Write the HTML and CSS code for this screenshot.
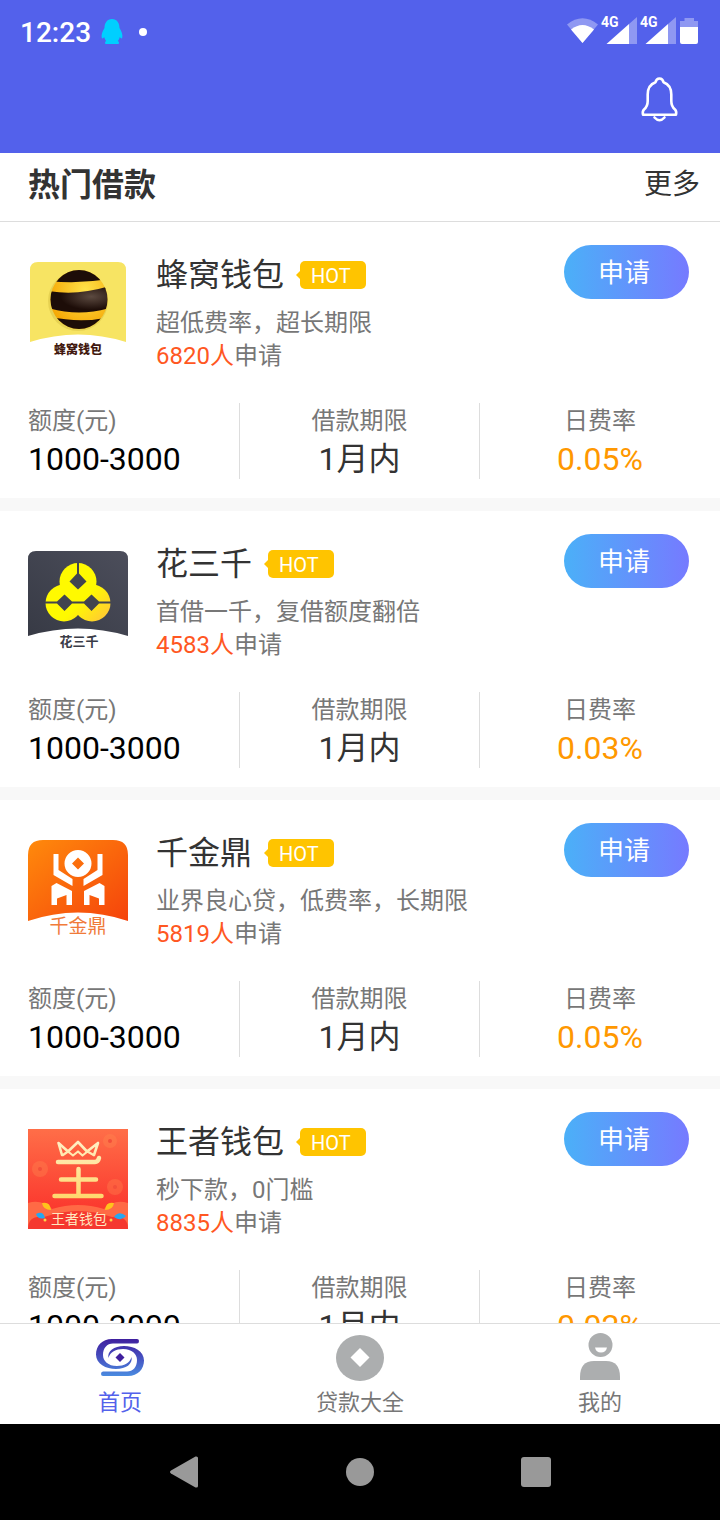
FILE: index.html
```html
<!DOCTYPE html>
<html lang="zh-CN">
<head>
<meta charset="utf-8">
<meta name="viewport" content="width=device-width, initial-scale=1.0">
<title>热门借款</title>
<link rel="stylesheet" href="styles.css">
</head>
<body>
<div class="statusbar">
  <span class="time">12:23</span>
  <svg class="qq" width="22" height="26" viewBox="0 0 22 26"><path fill="#00cfff" d="M11 0C6 0 3.500 4 3.500 9 1.500 12 0 16 .8 19c.4.900 1.600.200 2.400-1 .4 1.700 1.200 3 2 4-1.600.8-1.600 3-.2 3h12c1.400 0 1.400-2.200-.2-3 .8-1 1.600-2.300 2-4 .8 1.200 2 1.900 2.400 1C22 16 20.500 12 18.500 9 18.500 4 16 0 11 0z"/></svg>
  <span class="dot"></span>
  <svg class="signals" width="132" height="36" viewBox="0 0 132 36">
    <g fill="#fff" opacity=".35">
      <path d="M0 10.500Q15.500-2 31 10.500L15.500 29z"/>
      <path d="M62 10l8-7v27h-8zM101 10l8-7v27h-8z"/>
      <path d="M113 13V7h4.500V4h9.500v3h4v6z"/>
    </g>
    <g fill="#fff">
      <path d="M4 15.500Q15.500 6.500 27 15.500L15.500 29z"/>
      <path d="M39.500 30L62 10v20zM78.500 30L101 10v20zM113 13h18v15q0 2-2 2h-14q-2 0-2-2z"/>
      <text x="34" y="13">4G</text>
      <text x="73" y="13">4G</text>
    </g>
  </svg>
</div>

<header class="topbar">
  <button class="bell" aria-label="消息">
    <svg width="40" height="48" viewBox="0 0 40 48" fill="none" stroke="#fff" stroke-width="2.600" stroke-linejoin="round" stroke-linecap="round">
      <path d="M19.500 2.500c-2.300 0-3.500 1.300-4 3.700C10.500 8 7.700 12.500 7.700 18.500V25c0 4.500-1.200 6.500-3.700 8.500-1.300 1.200-1.500 3-1 5.200h33c.5-2.200.3-4-1-5.200-2.500-2-3.700-4-3.700-8.500v-6.500c0-6-2.800-10.500-7.800-12.300-.5-2.400-1.700-3.700-4-3.700z"/>
      <path d="M14.500 41.500q5 5.500 10 0"/>
    </svg>
  </button>
</header>

<div class="section-head">
  <h1>热门借款</h1>
  <a href="#">更多</a>
</div>

<main class="list">
  <article class="card">
    <div class="card-top">
      <svg class="logo" viewBox="0 0 100 100">
        <defs>
          <radialGradient id="bee" cx=".6" cy=".35" r=".65"><stop offset="0" stop-color="#ffe24a"/><stop offset="1" stop-color="#f5a400"/></radialGradient>
          <radialGradient id="beeDark" cx=".7" cy=".4" r=".5"><stop offset="0" stop-color="#5c4a40"/><stop offset="1" stop-color="#1d0d08"/></radialGradient>
          <clipPath id="ball"><ellipse cx="51" cy="37.500" rx="28.500" ry="29.500"/></clipPath>
        </defs>
        <path fill="#f7e463" d="M2 80V8q0-8 8-8h80q8 0 8 8v72Q50 65 2 80z"/>
        <ellipse cx="50" cy="39" rx="30" ry="30" fill="#dcc648" opacity=".6"/>
        <g clip-path="url(#ball)">
          <rect x="20" y="6" width="62" height="64" fill="url(#bee)"/>
          <path fill="#1d0d08" d="M20 5h62v12Q51 22 20 19zM20 54q31 8 62 1v16H20z"/>
          <path fill="url(#beeDark)" d="M20 29q30 5 62-5v22q-31 9-62 0z"/>
        </g>
        <text x="50" y="92" font-size="12" font-weight="900" fill="#42190f">蜂窝钱包</text>
      </svg>
      <div class="info">
        <h2>蜂窝钱包 <span class="hot">HOT</span></h2>
        <p>超低费率，超长期限</p>
        <p><em>6820人</em>申请</p>
      </div>
      <button class="apply">申请</button>
    </div>
    <dl class="stats">
      <div><dt>额度(元)</dt><dd>1000-3000</dd></div>
      <div><dt>借款期限</dt><dd>1月内</dd></div>
      <div><dt>日费率</dt><dd>0.05%</dd></div>
    </dl>
  </article>

  <article class="card">
    <div class="card-top">
      <svg class="logo" viewBox="0 0 100 100">
        <defs>
          <linearGradient id="slate" x1="0" y1="1" x2="1" y2="0"><stop offset="0" stop-color="#373a45"/><stop offset="1" stop-color="#4c4e5b"/></linearGradient>
          <linearGradient id="lemon" gradientUnits="userSpaceOnUse" x1="20" y1="12" x2="80" y2="70"><stop offset=".6" stop-color="#fffa00"/><stop offset="1" stop-color="#ffc43a"/></linearGradient>
        </defs>
        <path fill="url(#slate)" d="M0 85V8q0-8 8-8h84q8 0 8 8v77Q50 70 0 85z"/>
        <g fill="url(#lemon)">
          <circle cx="50" cy="30.500" r="18.500"/>
          <circle cx="36" cy="52" r="18.500"/>
          <circle cx="64" cy="52" r="18.500"/>
        </g>
        <path fill="#42444f" d="M49 11h2v11.500l7.500 8-8.500 8-8.500-8 7.500-8zM17 50.500h12l7.500-7 7.500 7h12l7.500-7 7.500 7h12v2H71l-7.500 7.500-7.500-7.500H44L36.500 60 29 52.500H17z"/>
        <text x="51" y="95" font-size="13" font-weight="700" fill="#3a3c47">花三千</text>
      </svg>
      <div class="info">
        <h2>花三千 <span class="hot">HOT</span></h2>
        <p>首借一千，复借额度翻倍</p>
        <p><em>4583人</em>申请</p>
      </div>
      <button class="apply">申请</button>
    </div>
    <dl class="stats">
      <div><dt>额度(元)</dt><dd>1000-3000</dd></div>
      <div><dt>借款期限</dt><dd>1月内</dd></div>
      <div><dt>日费率</dt><dd>0.03%</dd></div>
    </dl>
  </article>

  <article class="card">
    <div class="card-top">
      <svg class="logo" viewBox="0 0 100 100">
        <defs>
          <linearGradient id="orange" x1="0" y1="0" x2="1" y2="1"><stop offset="0" stop-color="#ff8a0c"/><stop offset="1" stop-color="#f5430c"/></linearGradient>
        </defs>
        <path fill="url(#orange)" d="M0 81V15Q0 0 15 0h70q15 0 15 15v66Q50 64 0 81z"/>
        <g fill="#fff">
          <path fill-rule="evenodd" d="M50 10a13.500 13.500 0 1 1 0 27 13.500 13.500 0 1 1 0-27zm0 7.500l-6 6 6 6 6-6z"/>
          <path d="M25.500 14h5v16l14 9v7l-19-11zM74.500 14h-5v16l-14 9v7l19-11z"/>
          <path d="M23.500 46l5-3L44 51v14h-5.500V55l-9.500 3.500V65h-5.500zM76.500 46l-5-3L56 51v14h5.500V55l9.500 3.500V65h5.500z"/>
        </g>
        <text x="50" y="93" font-size="19" fill="#f07b3a">千金鼎</text>
      </svg>
      <div class="info">
        <h2>千金鼎 <span class="hot">HOT</span></h2>
        <p>业界良心贷，低费率，长期限</p>
        <p><em>5819人</em>申请</p>
      </div>
      <button class="apply">申请</button>
    </div>
    <dl class="stats">
      <div><dt>额度(元)</dt><dd>1000-3000</dd></div>
      <div><dt>借款期限</dt><dd>1月内</dd></div>
      <div><dt>日费率</dt><dd>0.05%</dd></div>
    </dl>
  </article>

  <article class="card">
    <div class="card-top">
      <svg class="logo" viewBox="0 0 100 100">
        <defs>
          <linearGradient id="red" x1="0" y1="0" x2="0" y2="1"><stop offset="0" stop-color="#ff6e48"/><stop offset="1" stop-color="#fa2b28"/></linearGradient>
          <linearGradient id="gold" gradientUnits="userSpaceOnUse" x1="0" y1="10" x2="0" y2="70"><stop offset="0" stop-color="#fff0c8"/><stop offset="1" stop-color="#ffd76b"/></linearGradient>
        </defs>
        <path fill="url(#red)" d="M0 0h100v100H0z"/>
        <g fill="#ff8a50" opacity=".35"><circle cx="82" cy="12" r="7"/><circle cx="12" cy="40" r="8"/><circle cx="87" cy="58" r="8"/></g>
        <g fill="#f4503a"><circle cx="82" cy="12" r="2"/><circle cx="12" cy="40" r="2"/><circle cx="87" cy="58" r="2"/></g>
        <path fill="#ff6a45" d="M0 74q14-4 24 6 26-8 52 0 10-10 24-6v26H0z"/>
        <path fill="#f5382f" d="M0 100q0-14 16-12 34-12 68 0 16-2 16 12z"/>
        <path fill="#ffc21c" d="M14 74q8-2 9 7-8 0-9-7zM86 74q-8-2-9 7 8 0 9-7z"/>
        <path fill="#27a8f0" d="M8 85q7-4 9 4-7 2-9-4zM98 87q-7-6-12 1 7 5 12-1z"/>
        <circle cx="17" cy="91" r="1.500" fill="#ffd24a"/><circle cx="83" cy="91" r="1.500" fill="#ffd24a"/>
        <g fill="none" stroke="url(#gold)" stroke-linecap="round" stroke-linejoin="round">
          <path stroke-width="2.600" d="M34 26l-3.500-12 9.500 8.500L50 13l9 9.500 11-8.500-4 12"/>
          <path stroke-width="2.200" d="M35 26l5-3.500 5 4 5-4 4.500 4 5-4 6 3.500"/>
          <path stroke-width="4.500" d="M30 33h37q3 0 4-4M33 50.500h35M26.500 67h47M50.500 40v27"/>
        </g>
        <text x="51" y="95" font-size="14" fill="#ffe9c0">王者钱包</text>
      </svg>
      <div class="info">
        <h2>王者钱包 <span class="hot">HOT</span></h2>
        <p>秒下款，0门槛</p>
        <p><em>8835人</em>申请</p>
      </div>
      <button class="apply">申请</button>
    </div>
    <dl class="stats">
      <div><dt>额度(元)</dt><dd>1000-3000</dd></div>
      <div><dt>借款期限</dt><dd>1月内</dd></div>
      <div><dt>日费率</dt><dd>0.02%</dd></div>
    </dl>
  </article>
</main>

<nav class="tabs">
  <a class="active" href="#">
    <svg width="48" height="48" viewBox="0 0 48 48">
      <defs><linearGradient id="home" gradientUnits="userSpaceOnUse" x1="0" y1="6" x2="0" y2="43"><stop offset="0" stop-color="#3f1f9e"/><stop offset=".5" stop-color="#4650c0"/><stop offset="1" stop-color="#4a8be0"/></linearGradient></defs>
      <g fill="url(#home)">
        <path d="M41 6H16C6 6 0 13 0 21.500 0 31 10 36 20 36c10 0 17-5 15.500-12C34 30 28 33 21 33 12 33 7 28 7 22c0-7 4-11.500 10-11.500h24Q43 10.500 43 8 43 6 41 6z"/>
        <path d="M7 43h25c10 0 16-7 16-15.500C48 18 38 13 28 13c-10 0-17 5-15.500 12C14 19 20 16 27 16c9 0 14 5 14 11 0 7-4 11.500-10 11.500H7Q5 38.500 5 41 5 43 7 43z"/>
      </g>
      <path fill="#3f1f9e" d="M24 20l4.500 4.500L24 29l-4.500-4.500z"/>
    </svg>
    <span>首页</span>
  </a>
  <a href="#">
    <svg width="48" height="48" viewBox="0 0 48 48"><ellipse cx="24" cy="25" rx="24" ry="23" fill="#acaeaf"/><path fill="#fff" d="M24 15l9.500 9.500L24 34l-9.500-9.500z"/></svg>
    <span>贷款大全</span>
  </a>
  <a href="#">
    <svg width="48" height="48" viewBox="0 0 48 48"><circle cx="24.500" cy="12" r="12" fill="#acaeaf"/><path fill="#fff" d="M19 14.500h12q-1 5-6 5t-6-5z"/><path fill="#acaeaf" d="M4 47v-3q0-16 14-16h12q14 0 14 16v3z"/></svg>
    <span>我的</span>
  </a>
</nav>

<div class="sysbar">
  <button aria-label="返回"><svg width="32" height="32" viewBox="0 0 32 32"><path d="M3 14.500L27.500.500Q30 0 30 2v28q0 2-2.500 1.500L3 17.500q-2-1.500 0-3z"/></svg></button>
  <button aria-label="主页"><svg width="32" height="32" viewBox="0 0 32 32"><circle cx="16" cy="16" r="14"/></svg></button>
  <button aria-label="最近任务"><svg width="32" height="32" viewBox="0 0 32 32"><rect x="1" y="1" width="30" height="30" rx="3"/></svg></button>
</div>
</body>
</html>
```

FILE: styles.css
```css
* {
  box-sizing: border-box;
}
body {
  margin: 0;
  height: 100vh;
  display: flex;
  flex-direction: column;
  font-family: Roboto, "Noto Sans CJK SC", sans-serif;
  background: #fff;
  color: #333;
}
h1, h2, p, dl, dd {
  margin: 0;
}
a {
  color: inherit;
  text-decoration: none;
}
button {
  padding: 0;
  border: none;
  background: none;
  font-family: inherit;
  cursor: pointer;
}
svg {
  display: block;
}

/* status bar + header */
.statusbar {
  display: flex;
  align-items: center;
  height: 64px;
  padding: 0 21px 0 20px;
  background: #5361eb;
  color: #fff;
}
.time {
  font-size: 28px;
  font-weight: 500;
}
.qq {
  margin-left: 10px;
}
.dot {
  width: 8px;
  height: 8px;
  margin-left: 16px;
  border-radius: 50%;
  background: #fff;
}
.signals {
  margin-left: auto;
  font-size: 14px;
  font-weight: 700;
}
.topbar {
  display: flex;
  justify-content: flex-end;
  height: 89px;
  padding: 12px 40px;
  background: #5361eb;
}
.bell {
  height: 48px;
}

.section-head {
  display: flex;
  justify-content: space-between;
  align-items: center;
  padding: 8px 20px 12px 28px;
  border-bottom: 1px solid #ddd;
  line-height: 48px;
}
.section-head h1 {
  font-size: 32px;
  font-weight: 700;
}
.section-head a {
  font-size: 28px;
}

/* loan cards */
.list {
  flex: 1;
  min-height: 0;
  overflow-y: auto;
  scrollbar-width: none;
}
.card {
  padding: 23px 0 19px;
  border-bottom: 13px solid #f8f8f8;
}
.card-top {
  display: flex;
  align-items: flex-start;
  padding: 0 31px 0 28px;
}
.logo {
  width: 100px;
  height: 100px;
  margin-top: 17px;
  font-family: "Noto Sans CJK SC", sans-serif;
  text-anchor: middle;
}
.info {
  flex: 1;
  margin: 10px 0 30px 28px;
}
.info h2 {
  display: flex;
  align-items: center;
  margin-bottom: 12px;
  font-size: 32px;
  font-weight: 400;
  line-height: 40px;
}
.hot {
  position: relative;
  width: 66px;
  height: 28px;
  margin-left: 16px;
  padding-left: 11px;
  border-radius: 5px;
  background: #ffc400;
  color: #fff;
  font-size: 20px;
  line-height: 30px;
}
.hot::before {
  content: "";
  position: absolute;
  left: -4px;
  top: 10px;
  border: 4px solid transparent;
  border-left: none;
  border-right-color: #ffc400;
}
.info p {
  font-size: 24px;
  line-height: 33px;
  color: #777;
}
.info em {
  color: #ff5722;
  font-style: normal;
}
.apply {
  width: 125px;
  height: 54px;
  padding: 0 5px 4px 0;
  border-radius: 27px;
  background: linear-gradient(to right, #4bb0f8, #767aff);
  color: #fff;
  font-size: 26px;
}

.stats {
  display: grid;
  grid-template-columns: repeat(3, 1fr);
  text-align: center;
}
.stats div {
  border-right: 1px solid #ddd;
}
.stats div:first-child {
  padding-left: 28px;
  text-align: left;
}
.stats div:last-child {
  border-right: none;
}
.stats dt {
  font-size: 24px;
  line-height: 36px;
  color: #777;
}
.stats dd {
  font-size: 32px;
  line-height: 40px;
}
.stats div:first-child dd {
  color: #000;
}
.stats div:last-child dd {
  color: #ff9800;
}

/* bottom tabs */
.tabs {
  display: grid;
  grid-template-columns: repeat(3, 1fr);
  border-top: 1px solid #ddd;
  background: #fff;
}
.tabs a {
  display: flex;
  flex-direction: column;
  align-items: center;
  padding: 9px 0 7px;
  font-size: 22px;
  line-height: 28px;
  color: #777;
}
.tabs svg {
  margin-bottom: 8px;
}
.tabs .active {
  color: #5361eb;
}

.sysbar {
  display: flex;
  justify-content: center;
  align-items: center;
  gap: 144px;
  height: 96px;
  background: #000;
}
.sysbar svg {
  fill: #999;
}
```
